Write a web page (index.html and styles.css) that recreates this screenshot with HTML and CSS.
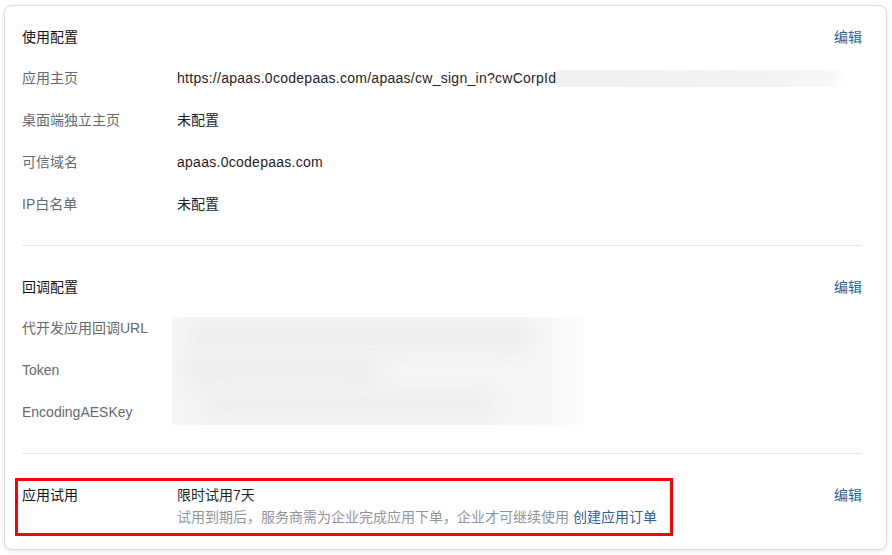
FILE: index.html
```html
<!DOCTYPE html>
<html lang="zh-CN">
<head>
    <meta charset="UTF-8">
    <meta name="viewport" content="width=device-width, initial-scale=1.0">
    <title>应用配置</title>
    <link rel="stylesheet" href="styles.css">
</head>
<body>

    <div class="card">

        <!-- 使用配置 -->
        <div class="section first">
            <div class="section-head">
                <span class="section-title">使用配置</span>
                <a class="edit-link" href="#">编辑</a>
            </div>
            <div class="info-grid">
                <span class="label">应用主页</span>
                <span class="value"><span class="latin">https://apaas.0codepaas.com/apaas/cw_sign_in?cwCorpId</span><span class="mask-line"></span></span>

                <span class="label">桌面端独立主页</span>
                <span class="value">未配置</span>

                <span class="label">可信域名</span>
                <span class="value latin">apaas.0codepaas.com</span>

                <span class="label">IP白名单</span>
                <span class="value">未配置</span>
            </div>
        </div>

        <!-- 回调配置 -->
        <div class="section">
            <div class="section-head">
                <span class="section-title">回调配置</span>
                <a class="edit-link" href="#">编辑</a>
            </div>
            <div class="info-grid">
                <span class="label">代开发应用回调URL</span>
                <div class="mask-block">
                    <span class="blot b1"></span>
                    <span class="blot b2"></span>
                    <span class="blot b3"></span>
                </div>
                <span class="label">Token</span>
                <span class="label">EncodingAESKey</span>
            </div>
        </div>

        <!-- 应用试用 -->
        <div class="section trial">
            <div class="trial-row">
                <span class="section-title col-label">应用试用</span>
                <div class="trial-info">
                    <div class="value">限时试用7天</div>
                    <div class="desc">试用到期后，服务商需为企业完成应用下单，企业才可继续使用 <a class="order-link" href="#">创建应用订单</a></div>
                </div>
                <a class="edit-link" href="#">编辑</a>
            </div>
            <div class="highlight"></div>
        </div>

    </div>

</body>
</html>
```

FILE: styles.css
```css
body {
    margin: 0;
    padding: 5px 5px 6px 4px;
    background-color: #ffffff;
    font-family: "Liberation Sans", "Noto Sans CJK SC", sans-serif;
    font-size: 14px;
    line-height: 22px;
    color: #1f2329;
}

.card {
    background: white;
    border: 1px solid #dcdcdc;
    border-radius: 8px;
    box-shadow: 0 1px 4px rgba(0, 0, 0, 0.1);
    padding: 0 24px 0 17px;
}

.section {
    padding: 30px 0;
    border-top: 1px solid #e4e5e7;
}

.section.first {
    padding-top: 20px;
    border-top: none;
}

.section-head {
    display: flex;
    justify-content: space-between;
    align-items: center;
}

.section-title {
    color: #111418;
}

.edit-link {
    color: #2d5f9b;
    text-decoration: none;
}

.info-grid {
    display: grid;
    grid-template-columns: 155px 1fr;
    grid-auto-rows: 22px;
    row-gap: 20px;
    margin-top: 19px;
}

.label {
    color: #646a73;
}

.value {
    color: #1f2329;
    white-space: nowrap;
    display: flex;
    align-items: center;
}

.latin {
    letter-spacing: 0.27px;
}

.mask-line {
    display: inline-block;
    width: 290px;
    height: 17px;
    background: linear-gradient(90deg, #f0f0f0, #f3f3f3 70%, #f8f8f8 95%, #fff);
}

.mask-block {
    grid-column: 2;
    grid-row: 1 / span 3;
    width: 412px;
    margin: 0 0 -2px -5px;
    background: linear-gradient(90deg, #f6f6f6 85%, #fbfbfb);
    position: relative;
    overflow: hidden;
}

.blot {
    position: absolute;
    background: #ebebeb;
    border-radius: 12px;
    filter: blur(10px);
}

.b1 {
    left: 20px;
    top: 8px;
    width: 340px;
    height: 22px;
}

.b2 {
    left: 10px;
    top: 42px;
    width: 200px;
    height: 22px;
}

.b3 {
    left: 30px;
    top: 78px;
    width: 290px;
    height: 20px;
}

.trial {
    position: relative;
    padding-bottom: 21px;
}

.trial-row {
    display: flex;
    align-items: flex-start;
}

.col-label {
    width: 155px;
    flex-shrink: 0;
}

.trial-info {
    flex: 1;
}

.desc {
    color: #8f959e;
}

.order-link {
    color: #2d5f9b;
    text-decoration: none;
}

.highlight {
    position: absolute;
    left: -7px;
    top: 24px;
    width: 658px;
    height: 58px;
    box-sizing: border-box;
    border: 3px solid #ff0000;
}
```
